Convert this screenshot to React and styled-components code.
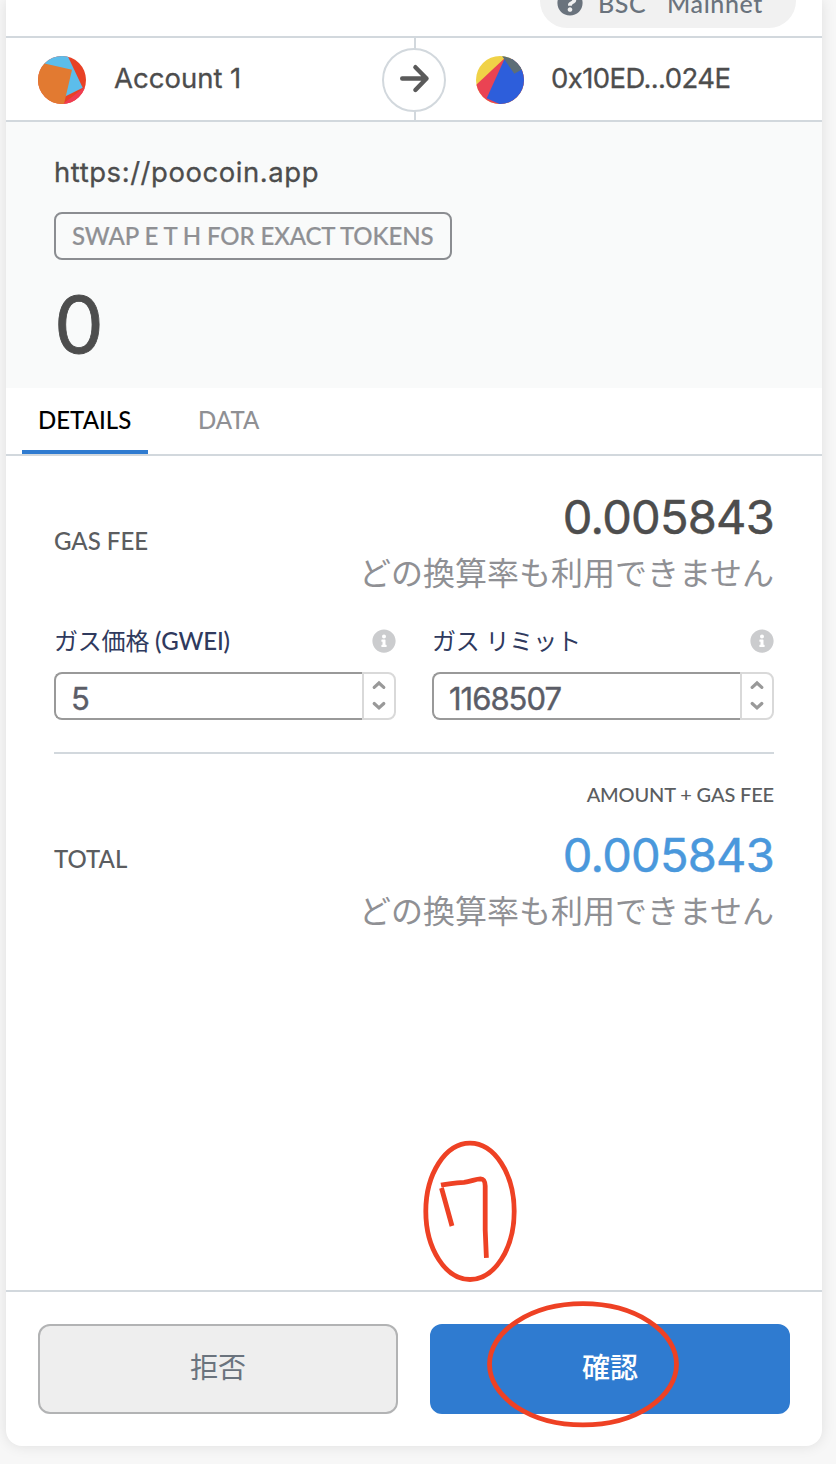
import React from "react";
import styled, { createGlobalStyle } from "styled-components";

const geometric = '"Lato", "Noto Sans CJK JP", sans-serif';
const numeric = '"Inter", "Noto Sans CJK JP", sans-serif';
const line = "#d2d8dd";

const GlobalStyle = createGlobalStyle`
  *, *::before, *::after { box-sizing: border-box; }
  html, body { margin: 0; padding: 0; }
  body {
    height: 1464px;
    overflow: hidden;
    background: #f7f7f7;
    font-family: ${geometric};
    color: #4d4d4d;
  }
`;

const Page = styled.div`
  position: relative;
  height: 1464px;
  padding: 0 14px 18px 6px;
  overflow: hidden;
`;

const Card = styled.main`
  display: flex;
  flex-direction: column;
  height: 1446px;
  background: #fff;
  border-radius: 0 0 16px 16px;
  box-shadow: 0 0 14px rgba(0, 0, 0, 0.1);
`;

const Text = styled.span`
  display: block;
  white-space: pre;
  font-family: ${(p) => (p.$numeric ? numeric : geometric)};
  font-size: ${(p) => p.$size}px;
  line-height: ${(p) => p.$line || p.$size}px;
  font-weight: ${(p) => p.$weight || 400};
  letter-spacing: ${(p) => p.$track || 0}px;
  color: ${(p) => p.$color || "#4d4d4d"};
  -webkit-text-stroke: ${(p) => p.$stroke || 0}px currentColor;
`;

const NetworkBar = styled.header`
  display: flex;
  flex: none;
  justify-content: flex-end;
  align-items: flex-end;
  height: 38px;
  padding: 0 26px 8px 0;
  border-bottom: 2px solid ${line};
  overflow: hidden;
`;

const NetworkPill = styled.div`
  display: flex;
  flex: none;
  align-items: center;
  width: 256px;
  height: 54px;
  padding: 4px 0 0 17px;
  gap: 15px;
  border-radius: 27px;
  background: #f1f1f1;
`;

const Parties = styled.section`
  display: flex;
  flex: none;
  height: 84px;
  border-bottom: 2px solid ${line};
`;

const Party = styled.div`
  display: flex;
  flex: none;
  align-items: center;
  width: 376px;
  gap: ${(p) => p.$gap}px;
  padding: 2px 0 0 ${(p) => p.$pad}px;
`;

const PartyName = styled(Text)`
  padding-bottom: 4px;
`;

const Divider = styled.div`
  display: flex;
  align-items: center;
  justify-content: center;
  width: 64px;
  background: linear-gradient(${line}, ${line}) 32px 0 / 2px 100% no-repeat;
`;

const ArrowCircle = styled.div`
  display: flex;
  align-items: center;
  justify-content: center;
  width: 64px;
  height: 64px;
  margin-top: 2px;
  border: 2px solid ${line};
  border-radius: 50%;
  background: #fff;
`;

const Summary = styled.section`
  display: flex;
  flex: none;
  flex-direction: column;
  align-items: flex-start;
  height: 266px;
  padding: 33px 48px 0;
  background: #f9fafa;
`;

const ActionTag = styled.div`
  display: flex;
  align-items: center;
  width: 398px;
  height: 48px;
  margin: 23px 0 24px;
  padding-left: 16px;
  border: 2px solid #8b8d91;
  border-radius: 8px;
`;

const Tabs = styled.nav`
  display: flex;
  flex: none;
  gap: 34px;
  height: 68px;
  padding: 0 16px;
  border-bottom: 2px solid ${line};
`;

const Tab = styled.div`
  height: 66px;
  padding: 18px 16px 0;
  border-bottom: 4px solid ${(p) => (p.$active ? "#2f7bd0" : "transparent")};
  ${(p) => p.$active && "width: 126px;"}
`;

const Content = styled.section`
  display: flex;
  flex: 1;
  flex-direction: column;
  padding: 0 48px;
`;

const FeeRow = styled.div`
  display: flex;
  align-items: flex-start;
  justify-content: space-between;
  height: ${(p) => p.$height}px;
  padding-top: ${(p) => p.$top}px;
`;

const FeeLabel = styled(Text)`
  margin-top: ${(p) => p.$drop}px;
`;

const Amounts = styled.div`
  display: flex;
  flex-direction: column;
  align-items: flex-end;
`;

const AmountCaption = styled(Text)`
  margin-bottom: 22px;
`;

const Fields = styled.div`
  display: grid;
  grid-template-columns: 342px 342px;
  gap: 36px;
  height: 154px;
  padding-top: 24px;
  border-bottom: 2px solid ${line};
`;

const FieldHead = styled.div`
  display: flex;
  align-items: center;
  justify-content: space-between;
  height: 34px;
  margin-bottom: 14px;
`;

const Unit = styled.span`
  font-weight: 500;
`;

const NumberInput = styled.div`
  display: flex;
  height: 48px;
`;

const NumberValue = styled.div`
  display: flex;
  flex: 1;
  align-items: center;
  padding: 4px 0 0 15px;
  border: 2px solid #999;
  border-right: 0;
  border-radius: 8px 0 0 8px;
`;

const Stepper = styled.div`
  display: flex;
  align-items: center;
  justify-content: center;
  width: 34px;
  border: 2px solid #d9d9d9;
  border-radius: 0 8px 8px 0;
`;

const Footer = styled.footer`
  display: flex;
  flex: none;
  gap: 32px;
  height: 156px;
  padding: 32px;
  border-top: 2px solid ${line};
`;

const Button = styled.button`
  display: flex;
  flex: 1;
  align-items: center;
  justify-content: center;
  height: 90px;
  padding: 0 0 4px;
  border: 2px solid ${(p) => (p.$primary ? "#2f7bd0" : "#b2b3b4")};
  border-radius: 12px;
  background: ${(p) => (p.$primary ? "#2f7bd0" : "#eee")};
`;

const Markup = styled.svg`
  position: absolute;
  left: 410px;
  top: 1130px;
  pointer-events: none;
`;

const QuestionIcon = () => (
  <svg width="26" height="26" viewBox="0 0 512 512" fill="#6a737d">
    <path d="M504 256c0 136.997-111.043 248-248 248S8 392.997 8 256C8 119.083 119.043 8 256 8s248 111.083 248 248zM262.655 90c-54.497 0-89.255 22.957-116.549 63.758-3.536 5.286-2.353 12.415 2.715 16.258l34.699 26.31c5.205 3.947 12.621 3.008 16.665-2.122 17.864-22.658 30.113-35.797 57.303-35.797 20.429 0 45.698 13.148 45.698 32.958 0 14.976-12.363 22.667-32.534 33.976C247.128 238.528 216 254.941 216 296v4c0 6.627 5.373 12 12 12h56c6.627 0 12-5.373 12-12v-1.333c0-28.462 83.186-29.647 83.186-106.667 0-58.002-60.165-102-116.531-102zM256 338c-25.365 0-46 20.635-46 46 0 25.364 20.635 46 46 46s46-20.636 46-46c0-25.365-20.635-46-46-46z" />
  </svg>
);

const InfoIcon = () => (
  <svg width="24" height="24" viewBox="0 0 512 512" fill="#cbccce">
    <path d="M256 8C119.043 8 8 119.083 8 256c0 136.997 111.043 248 248 248s248-111.003 248-248C504 119.083 392.957 8 256 8zm0 110c23.196 0 42 18.804 42 42s-18.804 42-42 42-42-18.804-42-42 18.804-42 42-42zm56 254c0 6.627-5.373 12-12 12h-88c-6.627 0-12-5.373-12-12v-24c0-6.627 5.373-12 12-12h12v-64h-12c-6.627 0-12-5.373-12-12v-24c0-6.627 5.373-12 12-12h64c6.627 0 12 5.373 12 12v100h12c6.627 0 12 5.373 12 12v24z" />
  </svg>
);

const SenderAvatar = () => (
  <svg width="48" height="48" viewBox="0 0 48 48">
    <clipPath id="sender"><circle cx="24" cy="24" r="24" /></clipPath>
    <g clipPath="url(#sender)">
      <rect width="48" height="48" fill="#e84125" />
      <path d="M0 0H29.7L44.7 31.7L20 44Z" fill="#5cbdeb" />
      <path d="M48 30.3L25 47.8V48H48Z" fill="#ef3c52" />
      <path d="M0 5.9L34 13.7L26 48H0Z" fill="#e27a31" />
    </g>
  </svg>
);

const RecipientAvatar = () => (
  <svg width="48" height="48" viewBox="0 0 48 48">
    <clipPath id="recipient"><circle cx="24" cy="24" r="24" /></clipPath>
    <g clipPath="url(#recipient)">
      <rect width="48" height="48" fill="#f0d247" />
      <path d="M28.3 2.6L0 29V48H48V2Z" fill="#ea4353" />
      <path d="M28.5 3L10.7 42.3L24 48.3H48V3Z" fill="#2d5edb" />
      <path d="M26 0L28.3 3.3L38.3 17.7L48 12.2V0Z" fill="#5d6e76" />
    </g>
  </svg>
);

const ArrowIcon = () => (
  <svg width="32" height="32" viewBox="0 0 32 32" fill="none" stroke="#5a5a5a" strokeWidth="4.4" strokeLinecap="round" strokeLinejoin="round">
    <path d="M4.200 14.500H28.500M17.400 3.200L28.500 14.500L17.400 26" />
  </svg>
);

const StepperIcon = () => (
  <svg width="16" height="32" viewBox="0 0 16 32" fill="none" stroke="#999" strokeWidth="3.2" strokeLinecap="round">
    <path d="M3.200 7.400L8 3L12.800 7.400M3.200 23.500L8 27.900L12.800 23.500" />
  </svg>
);

function GasField({ label, unit, value }) {
  return (
    <div>
      <FieldHead>
        <Text $size={24} $line={34} $color="#2f3a5e" $track={-0.2}>
          {label}
          {unit && <Unit>{` (${unit})`}</Unit>}
        </Text>
        <InfoIcon />
      </FieldHead>
      <NumberInput>
        <NumberValue>
          <Text $numeric $size={31} $stroke={0.4} $color="#5b5d67" $track={-1}>{value}</Text>
        </NumberValue>
        <Stepper><StepperIcon /></Stepper>
      </NumberInput>
    </div>
  );
}

function Amount({ color }) {
  return (
    <>
      <Text $numeric $size={47} $line={58} $stroke={0.5} $color={color} $track={-0.75}>0.005843</Text>
      <Text $size={32} $line={54} $color="#8f9094">どの換算率も利用できません</Text>
    </>
  );
}

export default function App() {
  return (
    <Page>
      <GlobalStyle />
      <Card>
        <NetworkBar>
          <NetworkPill>
            <QuestionIcon />
            <Text $size={25} $weight={500} $color="#6a737d" $track={0.6}>{"BSC   Mainnet"}</Text>
          </NetworkPill>
        </NetworkBar>
        <Parties>
          <Party $pad={32} $gap={28}>
            <SenderAvatar />
            <PartyName $numeric $size={27.5} $line={36} $stroke={0.3}>Account 1</PartyName>
          </Party>
          <Divider>
            <ArrowCircle><ArrowIcon /></ArrowCircle>
          </Divider>
          <Party $pad={30} $gap={27}>
            <RecipientAvatar />
            <PartyName $numeric $size={27.5} $line={36} $stroke={0.3} $track={-0.6}>0x10ED...024E</PartyName>
          </Party>
        </Parties>
        <Summary>
          <Text $numeric $size={27.5} $line={34} $stroke={0.3} $track={0.55}>https://poocoin.app</Text>
          <ActionTag>
            <Text $size={24} $weight={500} $stroke={0.2} $color="#8f9094" $track={-0.12}>SWAP E T H FOR EXACT TOKENS</Text>
          </ActionTag>
          <Text $numeric $size={79} $line={80} $stroke={0.8}>0</Text>
        </Summary>
        <Tabs>
          <Tab $active><Text $size={24} $line={28} $weight={500} $color="#000">DETAILS</Text></Tab>
          <Tab><Text $size={24} $line={28} $weight={500} $color="#8f9094">DATA</Text></Tab>
        </Tabs>
        <Content>
          <FeeRow $height={144} $top={32}>
            <FeeLabel $size={24} $weight={500} $color="#5b5d60" $drop={41}>GAS FEE</FeeLabel>
            <Amounts><Amount /></Amounts>
          </FeeRow>
          <Fields>
            <GasField label="ガス価格" unit="GWEI" value="5" />
            <GasField label="ガス リミット" value="1168507" />
          </Fields>
          <FeeRow $height={184} $top={30}>
            <FeeLabel $size={24} $weight={500} $color="#5b5d60" $drop={63}>TOTAL</FeeLabel>
            <Amounts>
              <AmountCaption $size={20} $weight={500} $color="#5b5d60" $track={-0.15}>AMOUNT + GAS FEE</AmountCaption>
              <Amount color="#4a98dc" />
            </Amounts>
          </FeeRow>
        </Content>
        <Footer>
          <Button><Text $size={28} $line={40} $color="#6a737d">拒否</Text></Button>
          <Button $primary><Text $size={28} $line={40} $weight={500} $color="#fff">確認</Text></Button>
        </Footer>
      </Card>
      <Markup width="280" height="310" viewBox="410 1130 280 310" fill="none" stroke="#ee4124" strokeWidth="4.8">
        <ellipse cx="470" cy="1211.3" rx="44.2" ry="68.2" />
        <path d="M441 1185.2C449 1183.6 456 1183 464 1182.4C471 1181.5 476 1178.8 480.500 1178.800C484 1179 485 1181 485.200 1186V1230L486.400 1257.800M441.500 1188L452 1226" />
        <ellipse cx="583" cy="1364.300" rx="93.500" ry="60.600" />
      </Markup>
    </Page>
  );
}
